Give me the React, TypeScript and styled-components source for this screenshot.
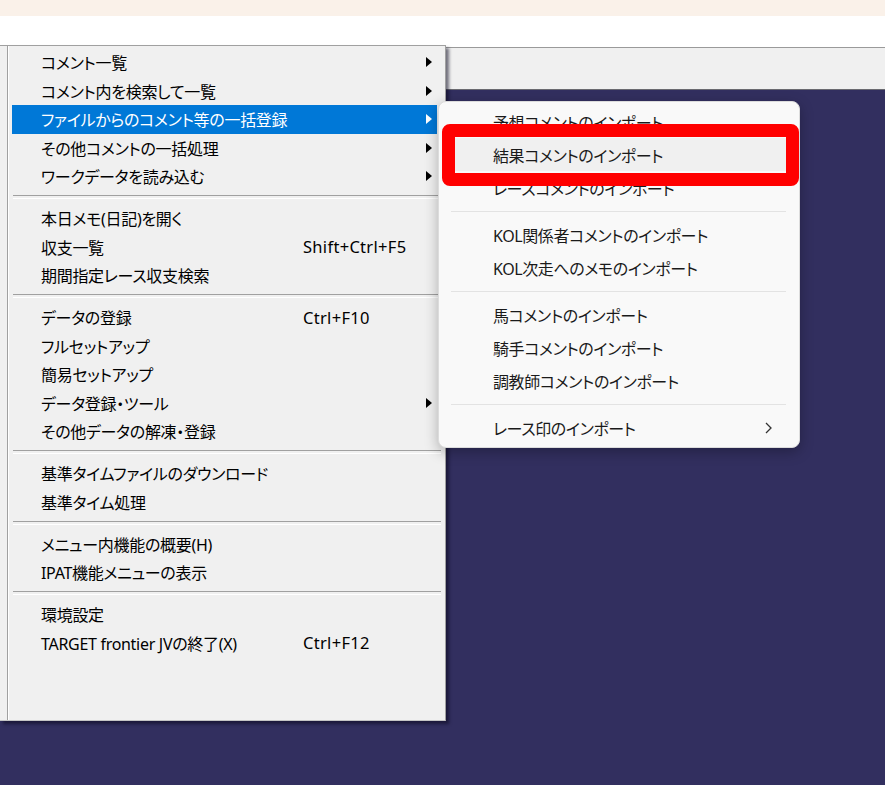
import styled, { createGlobalStyle } from 'styled-components'

const GlobalStyle = createGlobalStyle`
  html, body {
    margin: 0;
    padding: 0;
    background: #322f5f;
  }
  * {
    box-sizing: border-box;
  }
`

type MenuItem = {
  label: string
  shortcut?: string
  sub?: boolean
  active?: boolean
}

const mainGroups: MenuItem[][] = [
  [
    { label: 'コメント一覧', sub: true },
    { label: 'コメント内を検索して一覧', sub: true },
    { label: 'ファイルからのコメント等の一括登録', sub: true, active: true },
    { label: 'その他コメントの一括処理', sub: true },
    { label: 'ワークデータを読み込む', sub: true },
  ],
  [
    { label: '本日メモ(日記)を開く' },
    { label: '収支一覧', shortcut: 'Shift+Ctrl+F5' },
    { label: '期間指定レース収支検索' },
  ],
  [
    { label: 'データの登録', shortcut: 'Ctrl+F10' },
    { label: 'フルセットアップ' },
    { label: '簡易セットアップ' },
    { label: 'データ登録・ツール', sub: true },
    { label: 'その他データの解凍・登録' },
  ],
  [{ label: '基準タイムファイルのダウンロード' }, { label: '基準タイム処理' }],
  [{ label: 'メニュー内機能の概要(H)' }, { label: 'IPAT機能メニューの表示' }],
  [{ label: '環境設定' }, { label: 'TARGET frontier JVの終了(X)', shortcut: 'Ctrl+F12' }],
]

const subGroups: MenuItem[][] = [
  [
    { label: '予想コメントのインポート' },
    { label: '結果コメントのインポート', active: true },
    { label: 'レースコメントのインポート' },
  ],
  [{ label: 'KOL関係者コメントのインポート' }, { label: 'KOL次走へのメモのインポート' }],
  [
    { label: '馬コメントのインポート' },
    { label: '騎手コメントのインポート' },
    { label: '調教師コメントのインポート' },
  ],
  [{ label: 'レース印のインポート', sub: true }],
]

const Page = styled.div`
  position: relative;
  width: 885px;
  height: 785px;
  overflow: hidden;
  display: flex;
  flex-direction: column;
  font-family: 'Noto Sans', 'Noto Sans CJK JP', sans-serif;
  font-feature-settings: 'palt';
`

const TopStrip = styled.div`
  height: 16px;
  background: #faf1e9;
`

const WhiteBar = styled.div`
  height: 31px;
  background: #ffffff;
`

const Toolbar = styled.div`
  height: 43px;
  background: #f0f0f0;
  border-top: 1px solid #9a9a9a;
  border-bottom: 1px solid #6a6a70;
`

const Desktop = styled.div`
  flex: 1;
  background: #322f5f;
`

const Menu = styled.div`
  position: absolute;
  left: 0;
  top: 45px;
  width: 446px;
  height: 676px;
  display: flex;
  background: #f0f0f0;
  border: 1px solid #a0a0a0;
  border-left: none;
  border-bottom-color: #c4c4c4;
  box-shadow: 3px 3px 3px rgba(10, 8, 30, 0.55);
`

const Gutter = styled.div`
  width: 8px;
  border-right: 1px solid #a0a0a0;
  box-shadow: 1px 0 0 #ffffff;
`

const ItemList = styled.div`
  flex: 1;
  padding: 2px 8px 0 4px;
`

const Row = styled.div<{ $active?: boolean }>`
  height: 28.5px;
  display: grid;
  grid-template-columns: 262px 1fr 16px;
  align-items: center;
  padding-left: 29px;
  font-size: 16px;
  letter-spacing: -0.3px;
  color: ${({ $active }) => ($active ? '#ffffff' : '#000000')};
  background: ${({ $active }) => ($active ? '#0078d7' : 'transparent')};
  white-space: nowrap;
`

const Shortcut = styled.span`
  font-size: 16.5px;
  letter-spacing: 0.3px;
`

const Arrow = styled.svg`
  display: block;
  justify-self: center;
  fill: currentColor;
`

const Separator = styled.div`
  height: 13.5px;
  display: flex;
  align-items: center;
  margin: 0 -4px 0 1px;
  &::after {
    content: '';
    flex: 1;
    height: 2px;
    border-top: 1px solid #a0a0a0;
    border-bottom: 1px solid #ffffff;
  }
`

const SubMenu = styled.div`
  position: absolute;
  left: 438px;
  top: 101px;
  width: 362px;
  padding: 3px 0;
  background: #f9f9f9;
  border: 1px solid #dcdcdc;
  border-radius: 8px;
  box-shadow: 0 4px 14px rgba(0, 0, 0, 0.28);
`

const SubRow = styled.div<{ $active?: boolean }>`
  height: 33px;
  margin: 0 5px;
  padding: 0 22px 0 49px;
  display: flex;
  align-items: center;
  justify-content: space-between;
  border-radius: 4px;
  font-size: 16px;
  letter-spacing: -0.4px;
  color: #1a1a1a;
  background: ${({ $active }) => ($active ? '#f0f0f0' : 'transparent')};
  white-space: nowrap;
`

const SubSeparator = styled.div`
  height: 14px;
  display: flex;
  align-items: center;
  margin: 0 13px 0 12px;
  &::after {
    content: '';
    flex: 1;
    height: 1px;
    background: #e3e3e3;
  }
`

const Chevron = styled.svg`
  display: block;
  stroke: #333333;
  fill: none;
`

const Callout = styled.div`
  position: absolute;
  left: 442px;
  top: 124px;
  width: 357px;
  height: 62px;
  border: 13px solid #ff0000;
  border-radius: 8px;
`

function MainMenu() {
  return (
    <Menu>
      <Gutter />
      <ItemList>
        {mainGroups.map((group, gi) => (
          <div key={gi}>
            {gi > 0 && <Separator />}
            {group.map((item) => (
              <Row key={item.label} $active={item.active}>
                <span>{item.label}</span>
                <Shortcut>{item.shortcut}</Shortcut>
                {item.sub ? (
                  <Arrow width="6" height="10" viewBox="0 0 6 10">
                    <polygon points="0,0 6,5 0,10" />
                  </Arrow>
                ) : (
                  <span />
                )}
              </Row>
            ))}
          </div>
        ))}
      </ItemList>
    </Menu>
  )
}

function ImportMenu() {
  return (
    <SubMenu>
      {subGroups.map((group, gi) => (
        <div key={gi}>
          {gi > 0 && <SubSeparator />}
          {group.map((item) => (
            <SubRow key={item.label} $active={item.active}>
              <span>{item.label}</span>
              {item.sub && (
                <Chevron width="7" height="12" viewBox="0 0 7 12" strokeWidth="1.3">
                  <polyline points="1,1 6,6 1,11" />
                </Chevron>
              )}
            </SubRow>
          ))}
        </div>
      ))}
    </SubMenu>
  )
}

export default function App() {
  return (
    <>
      <GlobalStyle />
      <Page>
        <TopStrip />
        <WhiteBar />
        <Toolbar />
        <Desktop />
        <MainMenu />
        <ImportMenu />
        <Callout />
      </Page>
    </>
  )
}
